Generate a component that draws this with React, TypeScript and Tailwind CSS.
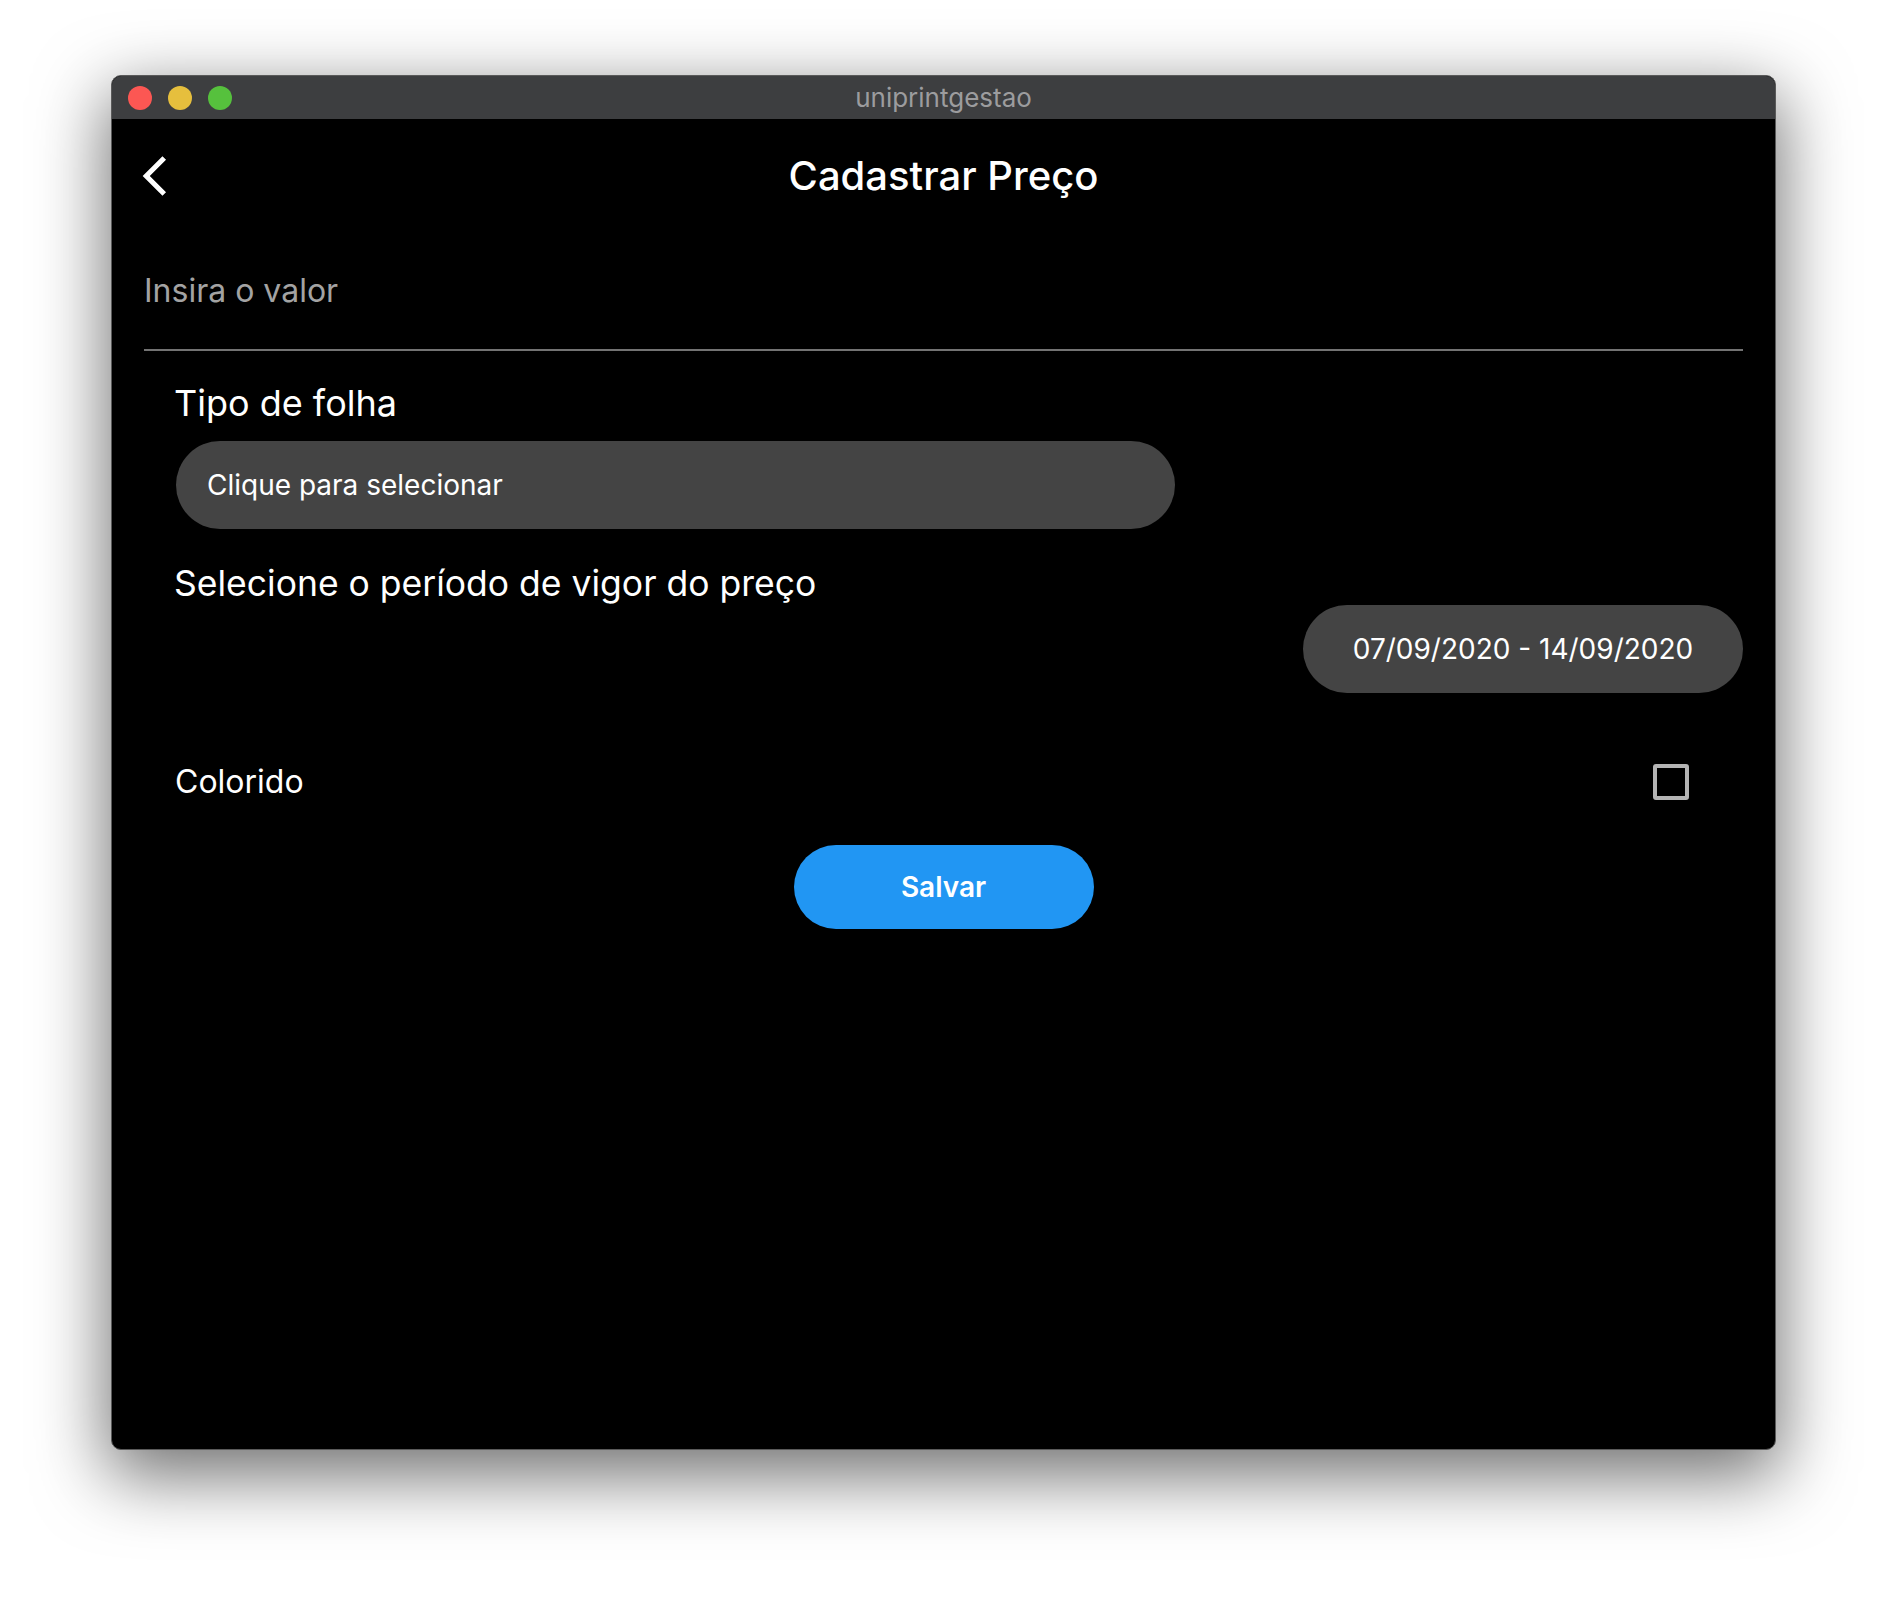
const FONT = "font-['Inter','Noto_Sans',sans-serif]";

function ChevronBack() {
  // Material "arrow_back_ios" glyph
  return (
    <svg viewBox="0 0 24 24" className="h-[48px] w-[48px]" fill="#ffffff">
      <path d="M17.51 3.87L15.73 2.1 5.84 12l9.9 9.9 1.77-1.77L9.38 12l8.13-8.13z" />
    </svg>
  );
}

function TitleBar() {
  return (
    <div className="relative flex h-[43px] shrink-0 items-center bg-[#3d3e40] px-[16px]">
      <div className="flex items-center gap-[16px]">
        <span className="h-[24px] w-[24px] rounded-full bg-[#fc5753]" />
        <span className="h-[24px] w-[24px] rounded-full bg-[#e6bf3d]" />
        <span className="h-[24px] w-[24px] rounded-full bg-[#56c13d]" />
      </div>
      <span className="absolute inset-x-0 text-center text-[26px] leading-[43px] text-[#9c9c9e]">
        uniprintgestao
      </span>
    </div>
  );
}

export default function App() {
  return (
    <div className={`min-h-[1598px] w-[1888px] bg-white pl-[111px] pt-[75px] ${FONT}`}>
      <div className="flex h-[1375px] w-[1665px] flex-col overflow-hidden rounded-[10px] border border-[#5a5a5a] bg-black shadow-[0_22px_70px_4px_rgba(0,0,0,0.56)]">
        <TitleBar />

        <div className="flex flex-1 flex-col">
          {/* app bar */}
          <div className="grid h-[112px] grid-cols-[1fr_auto_1fr] items-center px-[19px] pt-[2px]">
            <ChevronBack />
            <h1 className="text-[40px] font-medium leading-[40px] text-white">Cadastrar Preço</h1>
            <span />
          </div>

          <div className="flex flex-col px-[32px]">
            <div className="border-b-2 border-[#737373] pb-[38px] pt-[40px] text-[32px] leading-[40px] text-[#a3a3a3]">
              Insira o valor
            </div>

            <div className="mt-[30px] px-[30px] text-[36px] leading-[44px] text-white">Tipo de folha</div>

            <div className="ml-[32px] mt-[16px] flex h-[88px] w-[999px] items-center rounded-full bg-[#444444] px-[31px] text-[28px] text-white">
              Clique para selecionar
            </div>

            <div className="mt-[35px] px-[30px] text-[35.5px] leading-[40px] text-white">
              Selecione o período de vigor do preço
            </div>

            <div className="mt-[1px] flex h-[88px] w-[440px] items-center justify-center self-end rounded-full bg-[#444444] text-[28px] text-white">
              07/09/2020 - 14/09/2020
            </div>

            <div className="mt-[69px] flex h-[40px] items-center justify-between pl-[31px] pr-[54px]">
              <span className="text-[32px] leading-[40px] text-white">Colorido</span>
              <span className="h-[36px] w-[36px] rounded-[3px] border-4 border-[#b4b4b4]" />
            </div>

            <button className="mt-[43px] flex h-[84px] w-[300px] items-center justify-center self-center rounded-full bg-[#2196f3] text-[28px] font-semibold text-white">
              Salvar
            </button>
          </div>
        </div>
      </div>
    </div>
  );
}
